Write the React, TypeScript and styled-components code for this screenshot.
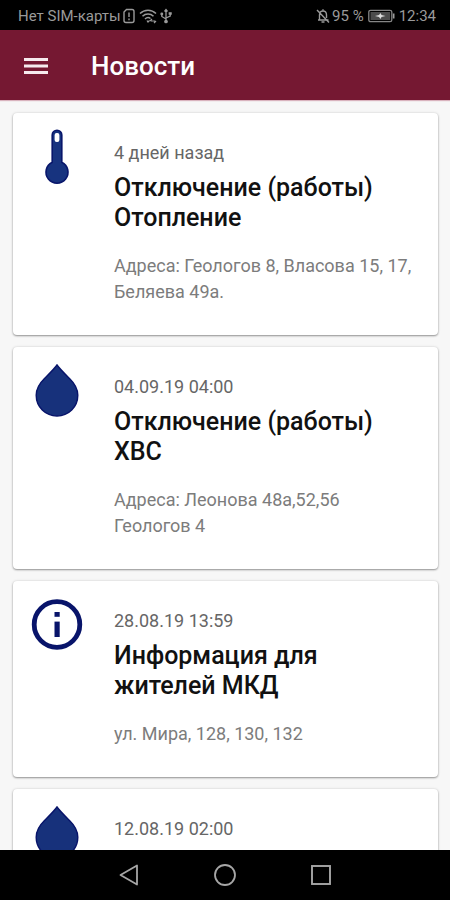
import React from "react";
import styled, { createGlobalStyle } from "styled-components";

const GlobalStyle = createGlobalStyle`
  *, *::before, *::after { box-sizing: border-box; }
  body {
    margin: 0;
    background: #f7f7f7;
    font-family: Roboto, "Noto Sans", sans-serif;
  }
`;

const Screen = styled.div`
  display: flex;
  flex-direction: column;
  height: 100vh;
  overflow: hidden;
`;

const StatusBar = styled.div`
  display: flex;
  flex: none;
  align-items: center;
  justify-content: space-between;
  height: 30px;
  padding: 2px 14px 0 18px;
  background: #000;
  color: #9a9a9a;
  font-size: 15px;
  line-height: 20px;
  white-space: nowrap;
`;

const StatusGroup = styled.div<{ $gap: number }>`
  display: flex;
  align-items: center;
  gap: ${(p) => p.$gap}px;

  svg { display: block; flex: none; }
`;

const AppBar = styled.header`
  display: flex;
  flex: none;
  align-items: center;
  gap: 31px;
  height: 70px;
  padding: 2px 12px 0;
  background: #751832;
  color: #fff;
  box-shadow: 0 1px 1px #d9b3be;
  z-index: 1;
`;

const MenuButton = styled.button`
  display: grid;
  place-items: center;
  width: 48px;
  height: 48px;
  padding: 0;
  border: 0;
  background: none;
  color: #f6eaee;
`;

const Heading = styled.h1`
  margin: 0;
  font-size: 26px;
  line-height: 32px;
  font-weight: 500;
`;

const Feed = styled.main`
  display: flex;
  flex: 1;
  flex-direction: column;
  gap: 12px;
  min-height: 0;
  padding: 13px 12px 13px 13px;
  overflow-y: auto;
  scrollbar-width: none;
`;

const Card = styled.article`
  display: grid;
  flex: none;
  grid-template-columns: 52px 1fr;
  gap: 31px;
  align-items: start;
  min-height: 195px;
  padding: 16px 18px 30px;
  border-radius: 4px;
  background: #fff;
  box-shadow: 0 1px 2px rgba(0, 0, 0, 0.38), 0 0 3px rgba(0, 0, 0, 0.12);

  > svg { display: block; }
`;

const CardText = styled.div`
  padding-top: 12px;
`;

const Stamp = styled.time`
  display: block;
  color: #666;
  font-size: 18px;
  line-height: 24px;
`;

const Title = styled.h2`
  margin: 8px 0 20px;
  color: #111;
  font-size: 25px;
  line-height: 30px;
  font-weight: 500;
`;

const Summary = styled.p`
  margin: 0;
  color: #7c7c7c;
  font-size: 18px;
  line-height: 26px;
  white-space: pre-line;
`;

const NavBar = styled.nav`
  display: flex;
  flex: none;
  align-items: center;
  justify-content: center;
  gap: 48px;
  height: 50px;
  background: #000;
`;

const NavButton = styled.button`
  display: grid;
  place-items: center;
  width: 48px;
  height: 48px;
  padding: 0;
  border: 0;
  background: none;
  color: #a6a6a6;
`;

type IconKind = "thermometer" | "drop" | "info";

function CardIcon({ kind }: { kind: IconKind }) {
  return (
    <svg width="52" height="56" viewBox="0 0 52 56" aria-hidden="true">
      {kind === "thermometer" && (
        <>
          <path
            d="M21.2 6a4.800 4.800 0 0 1 9.600 0V33.300a11 11 0 1 1-9.600 0Z"
            fill="#17337f"
            stroke="#08166b"
            strokeWidth="1.6"
          />
          <rect x="23.600" y="4" width="4.800" height="9" rx="2" fill="#fff" />
        </>
      )}
      {kind === "drop" && (
        <path
          d="M26 2C24 5 19 10 13.500 15.600C8 21 5.200 26 5.200 32.300C5.200 44 14.500 53 26 53S46.800 44 46.800 32.300C46.800 26 44 21 38.500 15.600C33 10 28 5 26 2Z"
          fill="#17317b"
          stroke="#08146a"
          strokeWidth="1.4"
        />
      )}
      {kind === "info" && (
        <>
          <circle cx="26" cy="27.500" r="22.800" fill="none" stroke="#08146a" strokeWidth="4.800" />
          <rect x="23.500" y="15" width="5.200" height="4.800" fill="#08146a" />
          <rect x="23.500" y="24.600" width="5.200" height="15.400" fill="#08146a" />
        </>
      )}
    </svg>
  );
}

interface NewsItem {
  icon: IconKind;
  date: string;
  title?: string;
  summary?: string;
}

const news: NewsItem[] = [
  {
    icon: "thermometer",
    date: "4 дней назад",
    title: "Отключение (работы) Отопление",
    summary: "Адреса: Геологов 8, Власова 15, 17, Беляева 49а.",
  },
  {
    icon: "drop",
    date: "04.09.19 04:00",
    title: "Отключение (работы) ХВС",
    summary: "Адреса: Леонова 48а,52,56\nГеологов 4",
  },
  {
    icon: "info",
    date: "28.08.19 13:59",
    title: "Информация для жителей МКД",
    summary: "ул. Мира, 128, 130, 132",
  },
  { icon: "drop", date: "12.08.19 02:00" },
];

export default function App() {
  return (
    <Screen>
      <GlobalStyle />
      <StatusBar>
        <StatusGroup $gap={3}>
          <StatusGroup $gap={1}>
            <span>Нет SIM-карты</span>
            <svg width="14" height="16" viewBox="0 0 14 16" fill="none" stroke="#9a9a9a" strokeWidth="1.4">
              <path d="M4.500 1.500H10a2 2 0 0 1 2 2v9a2 2 0 0 1-2 2H4a2 2 0 0 1-2-2V4ZM7 4.500v4.500M7 10.500v1.800" />
            </svg>
          </StatusGroup>
          <svg width="18" height="16" viewBox="0 0 18 16" fill="none" stroke="#9a9a9a" strokeWidth="1.500">
            <path d="M1 5.500C5.500 1 12.500 1 17 5.500M3.500 8.300C6.500 5.300 11.500 5.300 14.500 8.300M6 11C7.700 9.300 10 9.300 11.500 10.500" />
            <path d="M8 12.500l1 1.500 1.500-1.500M12 13h4M13 11l-2 2M15 15l2-2" strokeWidth="1.200" />
          </svg>
          <svg width="12" height="16" viewBox="0 0 12 16" fill="none" stroke="#9a9a9a" strokeWidth="1.300">
            <path d="M6 2v11M1.800 6v2.500L6 11M10.200 5.500V8L6 10M4.500 3.500L6 1.500l1.500 2" />
            <circle cx="6" cy="13.500" r="1.200" fill="#9a9a9a" />
            <circle cx="1.800" cy="6" r=".8" fill="#9a9a9a" />
            <path d="M9.300 4.800h1.800v1.400H9.300z" fill="#9a9a9a" />
          </svg>
        </StatusGroup>
        <StatusGroup $gap={4}>
          <StatusGroup $gap={2}>
            <svg width="14" height="16" viewBox="0 0 14 16" fill="none" stroke="#9a9a9a" strokeWidth="1.400">
              <path d="M2 12h10.500M3.500 12V7c0-2.500 1.500-4 3.500-4s3.500 1.500 3.500 4v3M7 1.200V3M5.500 14h3M1 2l12 12.500" />
            </svg>
            <span>95 %</span>
          </StatusGroup>
          <svg width="27" height="14" viewBox="0 0 27 14" fill="none">
            <rect x=".8" y="1.300" width="23" height="11.400" rx="1.800" stroke="#858585" strokeWidth="1.300" />
            <rect x="2.500" y="3" width="19.600" height="8" fill="#4c4c4c" />
            <path d="M24.800 4.500h1.700v5h-1.700z" fill="#9a9a9a" />
            <path d="M7 7l4-1 1.500-2 1 2 4 1-4 1-1 2-1.500-2Z" fill="#ddd" />
          </svg>
          <span>12:34</span>
        </StatusGroup>
      </StatusBar>
      <AppBar>
        <MenuButton type="button" aria-label="Меню">
          <svg width="24" height="18" viewBox="0 0 24 18" fill="currentColor">
            <path d="M0 1h24v3H0zM0 7.500h24v3H0zM0 14h24v3H0z" />
          </svg>
        </MenuButton>
        <Heading>Новости</Heading>
      </AppBar>
      <Feed>
        {news.map((item) => (
          <Card key={item.date}>
            <CardIcon kind={item.icon} />
            <CardText>
              <Stamp>{item.date}</Stamp>
              {item.title && <Title>{item.title}</Title>}
              {item.summary && <Summary>{item.summary}</Summary>}
            </CardText>
          </Card>
        ))}
      </Feed>
      <NavBar>
        <NavButton type="button" aria-label="Назад">
          <svg width="22" height="24" viewBox="0 0 22 24" fill="none" stroke="currentColor" strokeWidth="1.800" strokeLinejoin="round">
            <path d="M19 2.500v19L2.500 12Z" />
          </svg>
        </NavButton>
        <NavButton type="button" aria-label="Домой">
          <svg width="24" height="24" viewBox="0 0 24 24" fill="none" stroke="currentColor" strokeWidth="1.800">
            <circle cx="12" cy="12" r="10" />
          </svg>
        </NavButton>
        <NavButton type="button" aria-label="Недавние приложения">
          <svg width="22" height="22" viewBox="0 0 22 22" fill="none" stroke="currentColor" strokeWidth="1.900">
            <rect x="2" y="2" width="18" height="18" />
          </svg>
        </NavButton>
      </NavBar>
    </Screen>
  );
}
